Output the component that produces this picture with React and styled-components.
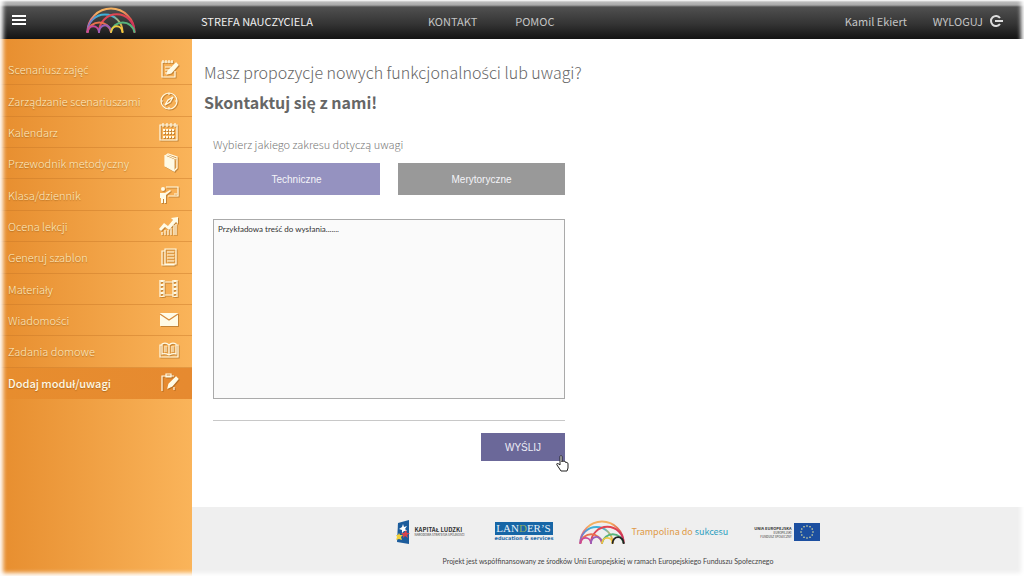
import React, { useState } from "react";
import styled, { createGlobalStyle, css } from "styled-components";

const GlobalStyle = createGlobalStyle`
  * {
    box-sizing: border-box;
  }

  body {
    background: #fff;
    color: #555;
    font-family: "Noto Sans CJK SC", "Noto Sans", sans-serif;
    margin: 0;
  }
`;

const Page = styled.div`
  display: grid;
  grid-template-columns: 192px 1fr;
  grid-template-rows: 39px 1fr auto;
  min-height: 100vh;
`;

const EdgeFade = styled.div`
  box-shadow: inset 0 0 4px 3px #fff;
  inset: -5px 0 0;
  pointer-events: none;
  position: fixed;
`;

const Accent = styled.span`
  font-family: "Open Sans", sans-serif;
`;

const Header = styled.header`
  align-items: center;
  background: linear-gradient(#fff 0, #bbb 2px, #aaa 5px, #505050 7px, #343434 24px, #141414 100%);
  display: grid;
  grid-column: 1 / -1;
  grid-template-columns: 201px 227px 1fr auto;
  padding: 2px 21px 0 0;
`;

const Brand = styled.div`
  align-items: center;
  display: flex;
  gap: 60px;
  padding-left: 12px;
`;

const MenuButton = styled.button`
  background: none;
  border: 0;
  display: block;
  height: 11px;
  padding: 0;
  width: 14px;
`;

const HeaderLink = styled.a`
  align-items: center;
  color: ${props => (props.$bright ? "#f0f0f0" : "#c4c4c4")};
  display: flex;
  font-size: 11px;
  gap: 6px;
  line-height: 16px;
  text-decoration: none;
`;

const HeaderNav = styled.nav`
  display: flex;
  gap: ${props => props.$gap};
`;

const Sidebar = styled.aside`
  background: linear-gradient(90deg, #e78e2f, #fab45a);
  grid-row: 2 / 4;
  padding-top: 15px;
`;

const Menu = styled.ul`
  display: flex;
  flex-direction: column;
  height: 345px;
  list-style: none;
  margin: 0;
  padding: 0;
`;

const MenuItem = styled.li`
  border-bottom: 1px solid rgba(200, 120, 40, 0.45);
  flex: 1;
  ${props => props.$active && css`
    background: linear-gradient(90deg, #e78d2e, #e68a30);
    border-bottom-color: transparent;
  `}
`;

const MenuLink = styled.a`
  align-items: center;
  color: #fdecc4;
  display: flex;
  font-size: 11px;
  font-weight: 300;
  height: 100%;
  justify-content: space-between;
  line-height: 16px;
  padding: 0 13px 0 8px;
  text-decoration: none;
  text-shadow: 0 1px 1px rgba(130, 80, 20, 0.5);
  ${props => props.$active && css`
    color: #fff8e4;
    font-weight: 500;
  `}

  svg {
    filter: drop-shadow(1px 1px 0 rgba(130, 80, 20, 0.45));
  }
`;

const Content = styled.main`
  padding: 21px 12px 24px;
`;

const Title = styled.h1`
  color: #666;
  font-size: 16px;
  font-weight: ${props => (props.$strong ? 600 : 300)};
  line-height: 24px;
  margin: 0 0 5px;
`;

const Form = styled.form`
  margin: 21px 0 0 9px;
  max-width: 352px;
`;

const Fieldset = styled.fieldset`
  border: 0;
  display: grid;
  gap: 18px;
  grid-template-columns: 1fr 1fr;
  margin: 0 0 24px;
  padding: 0;
`;

const Legend = styled.legend`
  color: #777;
  font-size: 11px;
  font-weight: 300;
  line-height: 18px;
  margin-bottom: 10px;
  padding: 0;
`;

const ScopeButton = styled.button`
  background: ${props => (props.$active ? "#9592c0" : "#999")};
  border: 0;
  color: #f4f4f8;
  font-family: "Liberation Sans", Arial, sans-serif;
  font-size: 10px;
  height: 32px;
`;

const Message = styled.textarea`
  background: #fafafa;
  border: 1px solid #aaa;
  color: #333;
  display: block;
  font-family: Lato, sans-serif;
  font-size: 8px;
  height: 180px;
  line-height: 10px;
  padding: 4px;
  resize: none;
  width: 100%;
`;

const Actions = styled.div`
  border-top: 1px solid #c8c8c8;
  display: flex;
  justify-content: flex-end;
  margin-top: 21px;
  padding-top: 12px;
`;

const SubmitWrapper = styled.div`
  position: relative;
`;

const SubmitButton = styled.button`
  background: #6b6899;
  border: 0;
  color: #ededf6;
  display: block;
  font-family: "Liberation Sans", Arial, sans-serif;
  font-size: 10px;
  height: 28px;
  width: 84px;
`;

const Pointer = styled.svg`
  left: 75px;
  position: absolute;
  top: 22px;
`;

const Footer = styled.footer`
  background: #efefef;
  padding: 10px 0 9px;
  text-align: center;
`;

const Sponsors = styled.div`
  align-items: center;
  display: flex;
  gap: 26px;
  height: 30px;
  justify-content: center;
`;

const Sponsor = styled.div`
  align-items: center;
  display: flex;
  gap: ${props => props.$gap || "5px"};
`;

const SponsorText = styled.div`
  color: #333;
  font-size: ${props => props.$size};
  font-weight: ${props => (props.$light ? 400 : 700)};
  line-height: ${props => (props.$light ? "4px" : "6px")};
  min-width: ${props => props.$width || "0"};
  text-align: ${props => props.$align || "left"};
`;

const Landers = styled.div`
  color: #1f6aa8;
  font-family: "DejaVu Sans", sans-serif;
  font-size: 5px;
  font-weight: bold;
  line-height: 7px;
  white-space: nowrap;
  width: 58px;

  strong {
    background: #1766a6;
    color: #e8f2fa;
    display: block;
    font-family: "Liberation Serif", serif;
    font-size: 11px;
    font-weight: normal;
    line-height: 13px;
  }

  em {
    color: #8fae6a;
    font-style: normal;
  }
`;

const Slogan = styled.span`
  color: #e09a48;
  font-size: 9px;
  line-height: 14px;

  b {
    color: #2e9fc0;
    font-weight: normal;
  }
`;

const Note = styled.p`
  color: #444;
  font-family: Lato, sans-serif;
  font-size: 7px;
  line-height: 12px;
  margin: 8px 0 0;
`;

const Polish = ({ children }) =>
  children.split(/([śćŚĆ])/).map((part, i) => (i % 2 ? <Accent key={i}>{part}</Accent> : part));

const Rainbow = ({ width, height, dark }) => (
  <svg width={width} height={height} viewBox="0 0 50 27" fill="none" strokeWidth="2" strokeLinecap="round">
    <defs>
      <linearGradient id="outer" x1="0" x2="1">
        <stop offset="0" stopColor="#e8607c" />
        <stop offset="0.2" stopColor="#f4b060" />
        <stop offset="0.7" stopColor="#f4b060" />
        <stop offset="1" stopColor="#dc3c48" />
      </linearGradient>
      <linearGradient id="left" x1="0" x2="1">
        <stop offset="0" stopColor="#8a6cc0" />
        <stop offset="0.3" stopColor="#40b0d8" />
        <stop offset="0.7" stopColor="#40b0d8" />
        <stop offset="1" stopColor="#f0b840" />
      </linearGradient>
      <linearGradient id="right" x1="0" x2="1">
        <stop offset="0" stopColor="#e04858" />
        <stop offset="0.7" stopColor="#e04450" />
        <stop offset="1" stopColor="#c83460" />
      </linearGradient>
    </defs>
    <path d="M1.500 25A23.500 23.500 0 0 1 48.500 25" stroke="url(#outer)" />
    <path d="M1.500 25A17.500 17.500 0 0 1 36.500 25" stroke="url(#left)" />
    <path d="M13 25A17.750 17.750 0 0 1 48.500 25" stroke="url(#right)" />
    <path d="M1.500 25A12 12 0 0 1 25 25" stroke="#e8704c" />
    <path d="M25 25A12 12 0 0 1 48.500 25" stroke="#58b47c" />
    <path d="M1.500 25A5.800 6.500 0 0 1 13 25" stroke="#c8489c" />
    <path d="M13 25A5.800 6.500 0 0 1 25 25" stroke="#9860b8" />
    <path d="M25 25A5.800 6.500 0 0 1 36.500 25" stroke="#f0c840" />
    {dark && <path d="M36.500 25A6 6.500 0 0 1 48.500 25" stroke="#222" />}
  </svg>
);

const iconShapes = {
  note: (
    <>
      <path d="M14 3H3v15h13v-6" />
      <path d="M4 1v3M7 1v3M10 1v3M13 1v3M6 8h6M6 11h4M6 14h3" />
      <path d="M17 4l2 2-7 8-4 1 1-3z" fill="#fffbe6" />
    </>
  ),
  compass: (
    <>
      <circle cx="10" cy="10" r="8" />
      <path d="M14 6l-3 5-5 3 3-5z" />
      <path d="M10 2v2M10 16v2M2 10h2M16 10h2" />
    </>
  ),
  calendar: (
    <>
      <path d="M1 3h17v15H1zM4 1v4M8 1v4M12 1v4M16 1v4" />
      <path d="M4 8h12M4 11h12M4 15h12" strokeWidth="2" strokeDasharray="2 1" />
    </>
  ),
  book: (
    <>
      <path d="M6 3l9 4v11l-9-5z" fill="#fffbe6" />
      <path d="M6 3l3-2 9 3v11l-3 3M8 2l9 4" />
    </>
  ),
  teacher: (
    <>
      <circle cx="4" cy="4" r="2" fill="#fffbe6" stroke="none" />
      <path d="M1 8h5l5-3 1 1-5 4v8H5v-4H4v4H2v-5H1z" fill="#fffbe6" stroke="none" />
      <path d="M7 2h12v9H9M15 9h3" />
    </>
  ),
  chart: (
    <>
      <path d="M0 13l5-6 4 3 5-6-2-2 7-1v7l-2-2-7 8-4-3-4 4z" fill="#fffbe6" stroke="none" />
      <path d="M3 16v3M6 14v5M9 14v5M12 12v7M15 9v10M17 8v11" />
    </>
  ),
  pages: (
    <>
      <path d="M6 2h11v15H6zM6 4H3v14h12v-1" />
      <path d="M8 5h7M8 8h7M8 11h7M8 14h7" />
    </>
  ),
  film: (
    <>
      <path d="M6 3h8M6 16h8M5 1v17M14 1v17M1 1v17M18 1v17" />
      <path d="M3 1v17M16 1v17" strokeWidth="3" strokeDasharray="2 2" />
    </>
  ),
  mail: (
    <>
      <path d="M1 3h18v13H1z" fill="#fffbe6" stroke="none" />
      <path d="M1 4l9 6 9-6" stroke="#d68a3a" />
    </>
  ),
  openBook: (
    <>
      <path d="M10 4C8 2 5 2 3 3v10c3-1 5 0 7 1 2-1 4-2 7-1V3c-2-1-5-1-7 1zM10 4v10M3 4H1v12h18V4h-2" />
      <path d="M5 6h3M5 8h3M5 10h3M12 6h3M12 8h3M12 10h3" />
    </>
  ),
  addNote: (
    <>
      <path d="M3 18V3h12M7 1h5v3H7z" />
      <path d="M17 4l2 2-6 7-4 2 1-4z" fill="#fffbe6" />
      <path d="M15 14v3" />
    </>
  ),
};

const MenuIcon = ({ name }) => (
  <svg width="20" height="20" viewBox="0 0 20 20" fill="none" stroke="#fffbe6" strokeWidth="1.2">
    {iconShapes[name]}
  </svg>
);

const menu = [
  { label: "Scenariusz zajęć", icon: "note" },
  { label: "Zarządzanie scenariuszami", icon: "compass" },
  { label: "Kalendarz", icon: "calendar" },
  { label: "Przewodnik metodyczny", icon: "book" },
  { label: "Klasa/dziennik", icon: "teacher" },
  { label: "Ocena lekcji", icon: "chart" },
  { label: "Generuj szablon", icon: "pages" },
  { label: "Materiały", icon: "film" },
  { label: "Wiadomości", icon: "mail" },
  { label: "Zadania domowe", icon: "openBook" },
  { label: "Dodaj moduł/uwagi", icon: "addNote", active: true },
];

const stars = Array.from({ length: 12 }, (_, i) => {
  const angle = (i * Math.PI) / 6;
  return { x: 13 + 6 * Math.cos(angle), y: 9 + 6 * Math.sin(angle) };
});

const scopes = ["Techniczne", "Merytoryczne"];

const TopBar = () => (
  <Header>
    <Brand>
      <MenuButton aria-label="Menu">
        <svg width="14" height="11" viewBox="0 0 14 11" fill="#fff" display="block">
          <path d="M0 0h14v2H0zM0 4h14v2H0zM0 8h14v2H0z" />
        </svg>
      </MenuButton>
      <Rainbow width={50} height={27} />
    </Brand>
    <HeaderLink href="#" $bright>STREFA NAUCZYCIELA</HeaderLink>
    <HeaderNav $gap="38px">
      <HeaderLink href="#">KONTAKT</HeaderLink>
      <HeaderLink href="#">POMOC</HeaderLink>
    </HeaderNav>
    <HeaderNav $gap="26px">
      <HeaderLink href="#">Kamil Ekiert</HeaderLink>
      <HeaderLink href="#">
        WYLOGUJ
        <svg width="14" height="14" viewBox="0 0 14 14" fill="none" stroke="#ddd" strokeWidth="2">
          <path d="M11 4A5 5 0 1 0 11 10M6 7h8" />
        </svg>
      </HeaderLink>
    </HeaderNav>
  </Header>
);

const SideMenu = () => (
  <Sidebar>
    <Menu>
      {menu.map(item => (
        <MenuItem key={item.label} $active={item.active}>
          <MenuLink href="#" $active={item.active}>
            <span><Polish>{item.label}</Polish></span>
            <MenuIcon name={item.icon} />
          </MenuLink>
        </MenuItem>
      ))}
    </Menu>
  </Sidebar>
);

const ContactForm = () => {
  const [scope, setScope] = useState(scopes[0]);

  return (
    <Form onSubmit={e => e.preventDefault()}>
      <Fieldset>
        <Legend>Wybierz jakiego zakresu dotyczą uwagi</Legend>
        {scopes.map(name => (
          <ScopeButton key={name} type="button" $active={name === scope} onClick={() => setScope(name)}>
            {name}
          </ScopeButton>
        ))}
      </Fieldset>
      <Message aria-label="Treść uwagi" defaultValue="Przykładowa treść do wysłania......." />
      <Actions>
        <SubmitWrapper>
          <SubmitButton>WYŚLIJ</SubmitButton>
          <Pointer width="14" height="17" viewBox="0 0 14 17" fill="#fff" stroke="#222">
            <path d="M4 10V2c0-2 2-2 2 0v5c0-2 2-1 2 0 0-1 2-1 2 1 0-1 2-1 2 1v4l-1 3H5L1 10c-1-2 1-2 3 0z" />
          </Pointer>
        </SubmitWrapper>
      </Actions>
    </Form>
  );
};

const PageFooter = () => (
  <Footer>
    <Sponsors>
      <Sponsor>
        <svg width="14" height="24" viewBox="0 0 14 24">
          <path d="M2 3L13 0v24L1 22z" fill="#1c5c9c" />
          <path d="M7 4l1 3 3-1-2 3 2 2-3 0-2 2v-3l-3-1 3-2z" fill="#fff" />
          <path d="M10 10l1 3 3 0-3 2 1 3-3-2-2 2v-3l-2-2h3z" fill="#d8434c" />
          <path d="M3 13l1 2 3 0-2 2 1 3-3-1-3 1 1-3-1-2 2 0z" fill="#f3d23a" />
        </svg>
        <SponsorText $size="6px" $width="54px">
          KAPITAŁ LUDZKI
          <SponsorText $size="3px" $light>NARODOWA STRATEGIA SPÓJNOŚCI</SponsorText>
        </SponsorText>
      </Sponsor>
      <Landers>
        <strong>LAN<em>D</em>ER’S</strong>
        education &amp; services
      </Landers>
      <Sponsor $gap="7px">
        <Rainbow width={46} height={25} dark />
        <Slogan>Trampolina do <b>sukcesu</b></Slogan>
      </Sponsor>
      <Sponsor $gap="3px">
        <SponsorText $size="4px" $align="right">
          UNIA EUROPEJSKA
          <SponsorText $size="3px" $light $align="right">
            EUROPEJSKI
            <br />
            FUNDUSZ SPOŁECZNY
          </SponsorText>
        </SponsorText>
        <svg width="26" height="18" viewBox="0 0 26 18">
          <path d="M0 0h26v18H0z" fill="#1c4fa0" />
          {stars.map((star, i) => (
            <circle key={i} cx={star.x} cy={star.y} r="0.8" fill="#e4e4a0" />
          ))}
        </svg>
      </Sponsor>
    </Sponsors>
    <Note>
      Projekt jest współfinansowany ze środków Unii Europejskiej w ramach Europejskiego Funduszu Społecznego
    </Note>
  </Footer>
);

const App = () => (
  <>
    <GlobalStyle />
    <Page>
      <TopBar />
      <SideMenu />
      <Content>
        <Title><Polish>Masz propozycje nowych funkcjonalności lub uwagi?</Polish></Title>
        <Title as="h2" $strong>Skontaktuj się z nami!</Title>
        <ContactForm />
      </Content>
      <PageFooter />
    </Page>
    <EdgeFade />
  </>
);

export default App;
